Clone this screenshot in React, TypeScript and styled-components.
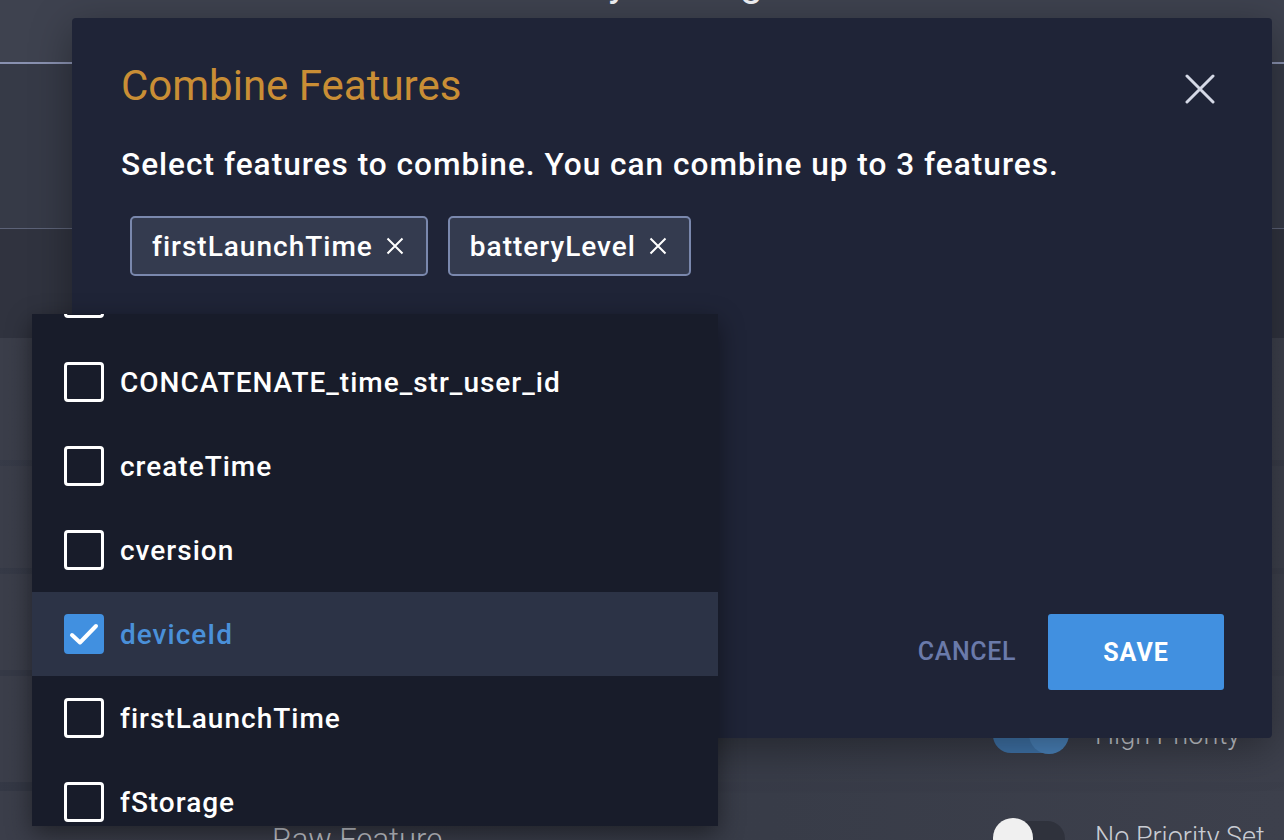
import React from 'react';
import styled, { createGlobalStyle } from 'styled-components';

const GlobalStyle = createGlobalStyle`
  html, body {
    margin: 0;
    padding: 0;
    background: #2f323d;
    font-family: Roboto, 'Noto Sans', Arial, sans-serif;
    overflow: hidden;
  }
  * { box-sizing: border-box; }
`;

// Page behind the dialog
const Page = styled.div`
  position: relative;
  width: 1284px;
  height: 840px;
  overflow: hidden;
  display: flex;
  flex-direction: column;
  background: linear-gradient(135deg, #3a3e4b 0%, #333744 45%, #3c3f4b 100%);
`;

const TopBar = styled.header`
  height: 64px;
  flex-shrink: 0;
  display: flex;
  justify-content: center;
  border-bottom: 2px solid #8991b0;
  background: #3e424f;
`;

const PageTitle = styled.h1`
  margin: -41px 0 0;
  font-size: 40px;
  font-weight: 400;
  color: #f0f1f4;
`;

const Section = styled.div<{ $h: number; $bg: string; $line?: boolean }>`
  height: ${({ $h }) => $h}px;
  flex-shrink: 0;
  background: ${({ $bg }) => $bg};
  border-bottom: ${({ $line }) => ($line ? '1px solid #5c6277' : 'none')};
`;

const FeatureRow = styled.div<{ $h: number; $gap: number; $top?: boolean; $shift?: number }>`
  height: ${({ $h }) => $h}px;
  flex-shrink: 0;
  margin-bottom: ${({ $gap }) => $gap}px;
  background: linear-gradient(90deg, #3b3e4a 0%, #383c48 60%, #3d404c 100%);
  display: flex;
  align-items: ${({ $top }) => ($top ? 'flex-start' : 'center')};
  padding: ${({ $top, $shift }) => ($top ? '30px' : `${$shift ?? 0}px`)} 0 0 272px;
`;

const RowLabel = styled.span`
  width: 721px;
  font-size: 31px;
  font-weight: 300;
  color: #c9ccd3;
`;

const Toggle = styled.span<{ $on: boolean }>`
  position: relative;
  width: 72px;
  height: 36px;
  display: inline-block;
  margin-right: 30px;
  border-radius: 18px;
  background: ${({ $on }) => ($on ? '#3f73a8' : '#2f323c')};
  &::after {
    content: '';
    position: absolute;
    top: -3px;
    left: ${({ $on }) => ($on ? '36px' : '0')};
    width: 40px;
    height: 40px;
    border-radius: 50%;
    background: ${({ $on }) => ($on ? '#4a83bb' : '#f0f0f0')};
  }
`;

const Priority = styled.span`
  font-size: 27px;
  font-weight: 300;
  color: #c9ccd3;
  white-space: nowrap;
`;

// Dialog
const Dialog = styled.div`
  position: absolute;
  left: 72px;
  top: 18px;
  width: 1200px;
  height: 720px;
  background: #1f2437;
  border-radius: 4px;
  box-shadow: 0 10px 40px rgba(0, 0, 0, 0.35);
  padding: 42px 48px 48px 49px;
  display: flex;
  flex-direction: column;
`;

const Header = styled.div`
  display: flex;
  align-items: center;
  justify-content: space-between;
`;

const Title = styled.h2`
  margin: 0;
  font-size: 42px;
  line-height: 52px;
  font-weight: 400;
  color: #c98e35;
`;

const CloseButton = styled.button`
  width: 40px;
  height: 40px;
  margin-right: 4px;
  margin-top: 6px;
  padding: 0;
  border: none;
  background: transparent;
  display: flex;
  align-items: center;
  justify-content: center;
  cursor: pointer;
`;

const Subtitle = styled.p`
  margin: 33px 0 0;
  font-size: 31.6px;
  line-height: 40px;
  letter-spacing: 1px;
  font-weight: 500;
  color: #ffffff;
`;

const ChipRow = styled.div`
  display: flex;
  gap: 20px;
  margin-top: 31px;
  margin-left: 9px;
`;

const Chip = styled.span`
  height: 60px;
  display: inline-flex;
  align-items: center;
  gap: 13px;
  padding: 0 22px 0 20px;
  background: #343b4f;
  border: 2px solid #7a88ad;
  border-radius: 5px;
  font-size: 28px;
  letter-spacing: 1px;
  font-weight: 500;
  color: #ffffff;
`;

const Actions = styled.div`
  margin-top: auto;
  display: flex;
  justify-content: flex-end;
  align-items: center;
  gap: 32px;
`;

const TextButton = styled.button`
  border: none;
  background: transparent;
  padding: 0;
  margin-top: -2px;
  font-family: inherit;
  font-size: 25px;
  letter-spacing: 0.6px;
  font-weight: 500;
  color: #6a7aaa;
  cursor: pointer;
`;

const PrimaryButton = styled.button`
  width: 176px;
  height: 76px;
  border: none;
  border-radius: 3px;
  background: #4190e0;
  font-family: inherit;
  font-size: 25px;
  letter-spacing: 1px;
  font-weight: 700;
  color: #ffffff;
  cursor: pointer;
`;

// Dropdown menu
const Menu = styled.div`
  position: absolute;
  left: -40px;
  top: 296px;
  width: 686px;
  height: 512px;
  overflow: hidden;
  background: #181c2a;
  box-shadow: 0 8px 24px rgba(0, 0, 0, 0.45);
`;

const MenuList = styled.ul<{ $offset: number }>`
  list-style: none;
  margin: ${({ $offset }) => -$offset}px 0 0;
  padding: 0;
`;

const MenuItem = styled.li<{ $active?: boolean }>`
  height: 84px;
  display: flex;
  align-items: center;
  gap: 16px;
  padding-left: 32px;
  background: ${({ $active }) => ($active ? '#2c3346' : 'transparent')};
  font-size: 28px;
  letter-spacing: 1px;
  font-weight: 500;
  color: ${({ $active }) => ($active ? '#4a90d9' : '#ffffff')};
`;

const Box = styled.span<{ $checked?: boolean }>`
  width: 40px;
  height: 40px;
  flex-shrink: 0;
  border-radius: 4px;
  border: 3px solid ${({ $checked }) => ($checked ? '#4190e0' : '#ffffff')};
  background: ${({ $checked }) => ($checked ? '#4190e0' : 'transparent')};
  display: flex;
  align-items: center;
  justify-content: center;
`;

const CloseIcon = () => (
  <svg width="30" height="30" viewBox="0 0 30 30" fill="none">
    <path d="M2 2L28 28M28 2L2 28" stroke="#d5d9e6" strokeWidth="3" strokeLinecap="round" />
  </svg>
);

const SmallX = () => (
  <svg width="18" height="18" viewBox="0 0 18 18" fill="none">
    <path d="M1.5 1.5L16.5 16.5M16.5 1.5L1.5 16.5" stroke="#ffffff" strokeWidth="2" />
  </svg>
);

const Check = () => (
  <svg width="32" height="32" viewBox="0 0 32 32" fill="none">
    <path d="M4 17L12 24.5L28 8" stroke="#ffffff" strokeWidth="4" strokeLinecap="round" strokeLinejoin="round" />
  </svg>
);

const options = [
  { name: 'appVersion', checked: false },
  { name: 'CONCATENATE_time_str_user_id', checked: false },
  { name: 'createTime', checked: false },
  { name: 'cversion', checked: false },
  { name: 'deviceId', checked: true },
  { name: 'firstLaunchTime', checked: false },
  { name: 'fStorage', checked: false },
];

const selected = ['firstLaunchTime', 'batteryLevel'];

export default function App() {
  return (
    <>
      <GlobalStyle />
      <Page>
        <TopBar>
          <PageTitle>Priority Settings</PageTitle>
        </TopBar>
        <Section $h={165} $bg="#363a47" $line />
        <Section $h={109} $bg="#30333f" />
        <FeatureRow $h={122} $gap={6}>
          <RowLabel>Raw Feature</RowLabel>
          <Toggle $on={false} />
          <Priority>No Priority Set</Priority>
        </FeatureRow>
        <FeatureRow $h={102} $gap={6}>
          <RowLabel>Raw Feature</RowLabel>
          <Toggle $on={false} />
          <Priority>No Priority Set</Priority>
        </FeatureRow>
        <FeatureRow $h={96} $gap={6}>
          <RowLabel>Raw Feature</RowLabel>
          <Toggle $on={false} />
          <Priority>No Priority Set</Priority>
        </FeatureRow>
        <FeatureRow $h={106} $gap={9} $shift={12}>
          <RowLabel>Raw Feature</RowLabel>
          <Toggle $on />
          <Priority>High Priority</Priority>
        </FeatureRow>
        <FeatureRow $h={106} $gap={0} $top>
          <RowLabel>Raw Feature</RowLabel>
          <Toggle $on={false} />
          <Priority>No Priority Set</Priority>
        </FeatureRow>

        <Dialog role="dialog" aria-labelledby="combine-title">
          <Header>
            <Title id="combine-title">Combine Features</Title>
            <CloseButton aria-label="Close">
              <CloseIcon />
            </CloseButton>
          </Header>
          <Subtitle>Select features to combine. You can combine up to 3 features.</Subtitle>
          <ChipRow>
            {selected.map((s) => (
              <Chip key={s}>
                {s}
                <SmallX />
              </Chip>
            ))}
          </ChipRow>
          <Actions>
            <TextButton>CANCEL</TextButton>
            <PrimaryButton>SAVE</PrimaryButton>
          </Actions>

          <Menu>
            <MenuList $offset={58}>
              {options.map((o) => (
                <MenuItem key={o.name} $active={o.checked}>
                  <Box $checked={o.checked}>{o.checked && <Check />}</Box>
                  {o.name}
                </MenuItem>
              ))}
            </MenuList>
          </Menu>
        </Dialog>
      </Page>
    </>
  );
}
